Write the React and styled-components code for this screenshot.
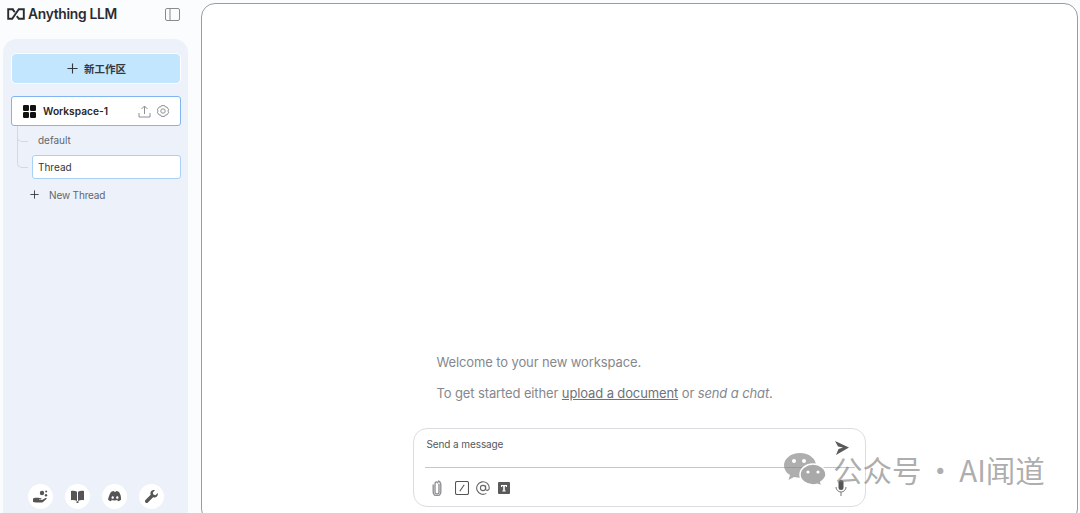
import React from "react";
import styled, { createGlobalStyle } from "styled-components";

const Global = createGlobalStyle`
  html, body { margin: 0; padding: 0; height: 100%; background: #fbfcfe; overflow: hidden; }
  body { font-family: Inter, "Noto Sans CJK SC", sans-serif; color: #222; }
  #root { height: 100%; }
`;

const Page = styled.div`
  position: relative;
  display: flex;
  align-items: flex-start;
  width: 1080px;
  height: 513px;
  overflow: hidden;
`;
const Side = styled.aside`
  width: 201px;
  height: 513px;
  flex: none;
  display: flex;
  flex-direction: column;
`;
const Brand = styled.div`
  height: 39px;
  display: flex;
  align-items: center;
  padding: 0 8px 11px 7px;
  box-sizing: border-box;
  justify-content: space-between;
  width: 188px;
`;
const Logo = styled.div`
  display: flex;
  align-items: center;
  gap: 3px;
  font-size: 13.8px;
  font-weight: 600;
  letter-spacing: -0.3px;
  color: #2b2b2f;
`;
const SidePanel = styled.div`
  margin-left: 3px;
  width: 185px;
  flex: 1;
  background: #edf2fa;
  border-radius: 14px 14px 0 0;
  box-sizing: border-box;
  padding: 14px 7px 3px 8px;
  display: flex;
  flex-direction: column;
`;
const NewWorkspace = styled.button`
  height: 31px;
  border: 1px solid #fff;
  border-radius: 5px;
  background: #c2e6fe;
  display: flex;
  align-items: center;
  justify-content: center;
  gap: 6px;
  font: 600 10.5px "Noto Sans CJK SC", sans-serif;
  color: #33383f;
  padding: 0 0 0 1px;
`;
const WorkspaceRow = styled.div`
  margin-top: 12px;
  height: 30px;
  box-sizing: border-box;
  background: #fff;
  border: 1px solid #7eb5f2;
  border-radius: 3px;
  display: flex;
  align-items: center;
  padding: 0 10px 0 10px;
  gap: 5px;
`;
const WorkspaceName = styled.span`
  flex: 1;
  margin-left: 2px;
  font-size: 10.2px;
  font-weight: 600;
  color: #26282c;
`;
const Threads = styled.div`
  position: relative;
  display: flex;
  flex-direction: column;
  padding: 0 0 0 21px;
`;
const Branch = styled.span`
  position: absolute;
  left: 6px;
  top: ${p => p.$top}px;
  width: 10px;
  height: ${p => p.$h}px;
  border-left: 1px solid #d5d9df;
  border-bottom: 1px solid #d5d9df;
  border-bottom-left-radius: 5px;
`;
const ThreadItem = styled.div`
  height: ${p => (p.$active ? 24 : 29)}px;
  box-sizing: border-box;
  display: flex;
  align-items: center;
  padding: ${p => (p.$active ? "0 0 0 5px" : "0 0 2px 6px")};
  font-size: 10px;
  color: ${p => (p.$active ? "#33363b" : "#62666c")};
  background: ${p => (p.$active ? "#fff" : "transparent")};
  border: ${p => (p.$active ? "1px solid #a9d0f7" : "none")};
  border-radius: 3px;
`;
const NewThread = styled.div`
  margin-top: 4px;
  height: 24px;
  display: flex;
  align-items: center;
  gap: 10px;
  padding: 0 0 1px 19px;
  box-sizing: border-box;
  font-size: 10px;
  letter-spacing: -0.15px;
  color: #62666c;
`;
const Footer = styled.div`
  margin-top: auto;
  display: flex;
  justify-content: center;
  gap: 12px;
  padding-bottom: 1px;
`;
const FootBtn = styled.div`
  width: 25px;
  height: 25px;
  border-radius: 50%;
  background: #fff;
  display: flex;
  align-items: center;
  justify-content: center;
`;
const Main = styled.main`
  width: 877px;
  height: 520px;
  flex: none;
  margin-top: 3px;
  box-sizing: border-box;
  border: 1px solid #9a9ca3;
  border-radius: 14px;
  background: #fff;
  display: flex;
  flex-direction: column;
  align-items: center;
  justify-content: flex-end;
  padding-bottom: 15px;
`;
const Column = styled.div`
  width: 453px;
  margin-right: 1px;
`;
const Welcome = styled.div`
  padding: 0 0 0 24px;
  font-size: 13px;
  color: #85888e;
  letter-spacing: -0.12px;
  margin-bottom: 26px;
`;
const WelcomeLine = styled.p`
  margin: 0 0 14px;
  line-height: 17px;
`;
const Link = styled.span`
  text-decoration: underline;
  color: #6f7278;
`;
const Composer = styled.div`
  height: 79px;
  box-sizing: border-box;
  border: 1px solid #dcdde0;
  border-radius: 14px;
  padding: 9px 10px 0 11px;
  background: #fff;
`;
const InputRow = styled.div`
  height: 29px;
  padding: 0 6px 0 2px;
  display: flex;
  justify-content: space-between;
  font-size: 10px;
  letter-spacing: -0.1px;
  color: #55585d;
  border-bottom: 1px solid #c6c7ca;
  & > svg { margin-top: 3px; }
`;
const Tools = styled.div`
  display: flex;
  align-items: center;
  justify-content: space-between;
  padding: 12px 8px 0 7px;
`;
const ToolGroup = styled.div`
  display: flex;
  align-items: center;
  gap: 7px;
  & > svg:first-child { margin-right: 6px; }
  & > svg:last-child { margin-left: 1px; }
`;
const Watermark = styled.div`
  position: absolute;
  left: 783px;
  top: 450px;
  display: flex;
  align-items: center;
  gap: 7px;
  font: 400 29.5px "Noto Sans CJK SC", sans-serif;
  color: rgba(120,120,120,0.62);
  line-height: 38px;
  word-spacing: -2.5px;
`;

const LogoMark = () => (
  <svg width="18" height="12" viewBox="0 0 18 12" fill="none" stroke="#2b2b2f" strokeWidth="1.9">
    <path d="M6.500 1.200H1.200v9.600h4L11.800 1.200h5v9.600h-5L9.800 8.200" />
    <path d="M5.500 1.200 7.800 4.200" />
  </svg>
);
const SidebarIcon = () => (
  <svg width="15" height="13" viewBox="0 0 15 13" fill="none" stroke="#888b90" strokeWidth="1">
    <rect x=".5" y=".5" width="14" height="12" rx="1.5" />
    <path d="M5 .5v12" />
  </svg>
);
const Plus = ({ s = 11, c = "#33383f", w = 1.2 }) => (
  <svg width={s} height={s} viewBox="0 0 12 12" stroke={c} strokeWidth={w} fill="none">
    <path d="M6 .5v11M.5 6h11" />
  </svg>
);
const Squares = () => (
  <svg width="14" height="13" viewBox="0 0 14 13" fill="#111">
    <rect x="1" width="6" height="6" rx="1.2" />
    <rect x="8" width="6" height="6" rx="1.2" />
    <rect x="1" y="7" width="6" height="6" rx="1.2" />
    <rect x="8" y="7" width="6" height="6" rx="1.2" />
  </svg>
);
const Upload = () => (
  <svg width="13" height="13" viewBox="0 0 13 13" fill="none" stroke="#8d9095" strokeWidth="1">
    <path d="M1 8v4h11V8M6.5 9V1M3.5 4l3-3 3 3" />
  </svg>
);
const Gear = () => (
  <svg width="14" height="13" viewBox="0 0 14 13" fill="none" stroke="#8d9095" strokeWidth="1">
    <path d="M5.300.6h3.400l.6 1.400 1.700.1 1.700 2.700-.9 1.200.9 1.200-1.700 2.700-1.700.1-.6 1.400H5.300l-.6-1.400-1.700-.1L1.300 7.200l.9-1.200-.9-1.200L3 2.100 4.700 2z" strokeLinejoin="round" />
    <circle cx="7" cy="6" r="2.200" />
  </svg>
);
const HandIcon = () => (
  <svg width="16" height="13" viewBox="0 0 16 13" fill="#555">
    <path d="M0 8.500 2 7.800h3l3 .5c.8.200.8 1.200 0 1.200H6v.5h3l3.500-2c.8-.4 1.500.4 1 1L10 12c-.6.500-1.200.6-2 .6H3L0 12z" />
    <circle cx="9" cy="3" r="2.200" /><circle cx="13" cy="5.200" r="1.200" /><circle cx="13.200" cy="1.500" r="1" />
  </svg>
);
const BookIcon = () => (
  <svg width="13" height="13" viewBox="0 0 13 13" fill="#555">
    <path d="M0 1c2-.6 4-.4 6 .7V11C4 10 2 9.800 0 10.200zM13 1c-2-.6-4-.4-6 .7V11c2-1 4-1.200 6-.8zM5.500 11.200h2V13h-2z" />
  </svg>
);
const DiscordIcon = () => (
  <svg width="14" height="11" viewBox="0 0 14 11" fill="#555">
    <path fillRule="evenodd" d="M3 1c1-.5 2-.8 2.700-.9l.4.7h1.800l.4-.7c.7.100 1.700.4 2.700.9 1.500 2.300 2.200 4.700 2 7.800-1 .8-2 1.200-3 1.500l-.7-1.100c.5-.2.8-.4 1-.6-2.500 1.200-5.100 1.200-7.600 0 .2.200.5.400 1 .6l-.7 1.100c-1-.3-2-.7-3-1.500C.8 5.700 1.500 3.300 3 1zm1.700 4.200c-.7 0-1.200.6-1.200 1.300s.5 1.300 1.200 1.300 1.200-.6 1.200-1.300-.5-1.300-1.200-1.300zm4.600 0c-.7 0-1.200.6-1.200 1.300s.5 1.300 1.200 1.300 1.200-.6 1.200-1.300-.5-1.300-1.200-1.300z" />
  </svg>
);
const WrenchIcon = () => (
  <svg width="13" height="13" viewBox="0 0 13 13" fill="#555">
    <path d="M12.700 3 10.500 5.200 8.300 4.600 7.800 2.400 10 .3C8.300-.3 6.200.5 5.600 2.300c-.3.900-.2 1.700.1 2.500L.5 10c-.7.700-.7 1.700 0 2.400.7.700 1.700.7 2.400 0l5.200-5.200c.8.300 1.700.4 2.500.1 1.800-.6 2.700-2.600 2.100-4.300z" />
  </svg>
);
const Send = () => (
  <svg width="14" height="14" viewBox="0 0 14 14" fill="#5a5a5a">
    <path d="M0 0 14 6.500 1 14l2.500-6 4.500-1.500L3 5.500z" />
  </svg>
);
const Clip = () => (
  <svg width="10" height="16" viewBox="0 0 10 16" fill="none" stroke="#909295" strokeWidth="1.400">
    <path d="M7 4v8a2 2 0 0 1-4 0V3.500a1.500 1.500 0 0 1 3 0" />
    <path d="M1.200 4.500V12a3.800 3.800 0 0 0 7.600 0V4.500A3.800 3.800 0 0 0 6 1" />
  </svg>
);
const Slash = () => (
  <svg width="14" height="14" viewBox="0 0 14 14" fill="none" stroke="#555" strokeWidth="1.100">
    <rect x=".5" y=".5" width="13" height="13" rx="1.500" />
    <path d="M4.800 10.200 9.200 3.800" />
  </svg>
);
const At = () => (
  <svg width="14" height="14" viewBox="0 0 14 14" fill="none" stroke="#666" strokeWidth="1.100">
    <circle cx="7" cy="7" r="2.600" />
    <path d="M9.600 4.400V8c0 2 3.700 2 3.700-1A6.300 6.300 0 1 0 10.300 12.400" />
  </svg>
);
const TextIcon = () => (
  <svg width="12" height="12" viewBox="0 0 12 12">
    <rect width="12" height="12" rx="1" fill="#5a5a5a" />
    <path d="M3 3h6v2H8V4.200H6.800v4.300h.8v.9H4.400v-.9h.8V4.200H4V5H3z" fill="#fff" />
  </svg>
);
const Mic = () => (
  <svg width="12" height="16" viewBox="0 0 12 16" fill="none" stroke="#777" strokeWidth="1">
    <rect x="3.500" y="0" width="5" height="10" rx="2.500" fill="#555" stroke="none" />
    <path d="M1 7a5 5 0 0 0 10 0M6 12v4" />
  </svg>
);
const WeChat = () => (
  <svg width="43" height="34" viewBox="0 0 43 34">
    <path d="M17 1C8 1 1 6.500 1 13.500c0 4 2.300 7.300 6 9.600L5.500 28l5.500-3c2 .500 4 .800 6 .800 8.800 0 16-5.600 16-12.300C33 6.500 26 1 17 1z" fill="rgba(125,125,125,.62)" />
    <path d="M30 12c-7 0-13 4.800-13 10.500S23 33 30 33c1.500 0 3-.2 4.300-.7L39 34l-1.300-4c3-2 5.300-4.500 5.300-7.500C43 16.800 37 12 30 12z" fill="#a9a9a9" stroke="#fff" strokeWidth="1.500" />
    <circle cx="11" cy="9" r="2" fill="#fff" /><circle cx="21" cy="9" r="2" fill="#fff" />
    <circle cx="25" cy="20" r="1.600" fill="#fff" /><circle cx="35" cy="20" r="1.600" fill="#fff" />
  </svg>
);

export default function App() {
  return (
    <Page>
      <Global />
      <Side>
        <Brand>
          <Logo><LogoMark />Anything LLM</Logo>
          <SidebarIcon />
        </Brand>
        <SidePanel>
          <NewWorkspace><Plus />新工作区</NewWorkspace>
          <WorkspaceRow>
            <Squares />
            <WorkspaceName>Workspace-1</WorkspaceName>
            <Upload />
            <Gear />
          </WorkspaceRow>
          <Threads>
            <Branch $top={0} $h={15} />
            <Branch $top={0} $h={41} />
            <ThreadItem>default</ThreadItem>
            <ThreadItem $active>Thread</ThreadItem>
          </Threads>
          <NewThread><Plus s={9} c="#33383f" />New Thread</NewThread>
          <Footer>
            <FootBtn><HandIcon /></FootBtn>
            <FootBtn><BookIcon /></FootBtn>
            <FootBtn><DiscordIcon /></FootBtn>
            <FootBtn><WrenchIcon /></FootBtn>
          </Footer>
        </SidePanel>
      </Side>
      <Main>
        <Column>
          <Welcome>
            <WelcomeLine>Welcome to your new workspace.</WelcomeLine>
            <WelcomeLine>To get started either <Link>upload a document</Link> or <em>send a chat</em>.</WelcomeLine>
          </Welcome>
          <Composer>
            <InputRow><span>Send a message</span><Send /></InputRow>
            <Tools>
              <ToolGroup><Clip /><Slash /><At /><TextIcon /></ToolGroup>
              <Mic />
            </Tools>
          </Composer>
        </Column>
      </Main>
      <Watermark><WeChat /><span>公众号 · AI闻道</span></Watermark>
    </Page>
  );
}
